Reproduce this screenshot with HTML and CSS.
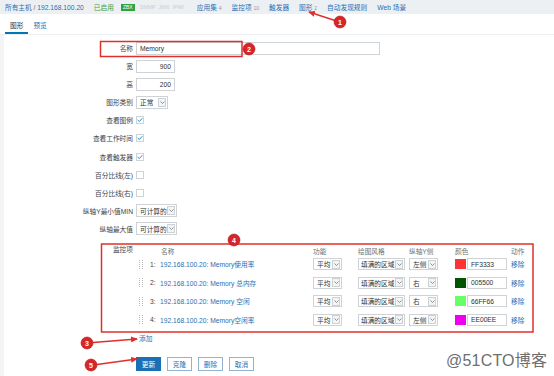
FILE: index.html
```html
<!DOCTYPE html>
<html lang="zh-CN">
<head>
<meta charset="utf-8">
<title>图形</title>
<link rel="stylesheet" href="styles.css">
</head>
<body>
<div class="page">
  <nav class="hostnav">
    <span class="crumb"><a class="lnk">所有主机</a> <span class="sep">/</span> <a class="lnk">192.168.100.20</a></span>
    <span class="enabled">已启用</span>
    <span class="avail"><span class="zbx">ZBX</span><span class="na">SNMP</span><span class="na">JMX</span><span class="na">IPMI</span></span>
    <a class="lnk">应用集 <sup>4</sup></a>
    <a class="lnk">监控项 <sup>10</sup></a>
    <a class="lnk">触发器</a>
    <a class="lnk cur">图形 <sup>2</sup></a>
    <a class="lnk">自动发现规则</a>
    <a class="lnk">Web 场景</a>
  </nav>
  <div class="tabs"><span class="tab active">图形</span><span class="tab">预览</span></div>
  <main class="panel">
    <div class="form">
      <div class="row"><span class="lbl">名称</span><div class="fld"><span class="input w-name">Memory</span></div></div>
      <div class="row"><span class="lbl">宽</span><div class="fld"><span class="input num w-num">900</span></div></div>
      <div class="row"><span class="lbl">高</span><div class="fld"><span class="input num w-num">200</span></div></div>
      <div class="row"><span class="lbl">图形类别</span><div class="fld"><span class="sel w-type"><span class="val">正常</span><span class="arr"><svg width="5" height="3" viewBox="0 0 5 3"><path d="M0.5 0.5 L2.5 2.5 L4.5 0.5" fill="none" stroke="#777" stroke-width="0.8"/></svg></span></span></div></div>
      <div class="row"><span class="lbl">查看图例</span><div class="fld"><span class="cb"><svg width="7" height="6" viewBox="0 0 7 6"><path d="M0.8 3 L2.7 4.8 L6.2 1" fill="none" stroke="#0275b8" stroke-width="1"/></svg></span></div></div>
      <div class="row"><span class="lbl">查看工作时间</span><div class="fld"><span class="cb"><svg width="7" height="6" viewBox="0 0 7 6"><path d="M0.8 3 L2.7 4.8 L6.2 1" fill="none" stroke="#0275b8" stroke-width="1"/></svg></span></div></div>
      <div class="row"><span class="lbl">查看触发器</span><div class="fld"><span class="cb"><svg width="7" height="6" viewBox="0 0 7 6"><path d="M0.8 3 L2.7 4.8 L6.2 1" fill="none" stroke="#0275b8" stroke-width="1"/></svg></span></div></div>
      <div class="row"><span class="lbl">百分比线(左)</span><div class="fld"><span class="cb"></span></div></div>
      <div class="row"><span class="lbl">百分比线(右)</span><div class="fld"><span class="cb"></span></div></div>
      <div class="row"><span class="lbl">纵轴Y最小值MIN</span><div class="fld"><span class="sel w-calc"><span class="val">可计算的</span><span class="arr"><svg width="5" height="3" viewBox="0 0 5 3"><path d="M0.5 0.5 L2.5 2.5 L4.5 0.5" fill="none" stroke="#777" stroke-width="0.8"/></svg></span></span></div></div>
      <div class="row"><span class="lbl">纵轴最大值</span><div class="fld"><span class="sel w-calc"><span class="val">可计算的</span><span class="arr"><svg width="5" height="3" viewBox="0 0 5 3"><path d="M0.5 0.5 L2.5 2.5 L4.5 0.5" fill="none" stroke="#777" stroke-width="0.8"/></svg></span></span></div></div>

      <div class="row row-items"><span class="lbl lbl-top">监控项</span>
        <div class="fld">
          <div class="items">
            <div class="ihead"><span></span><span></span><span>名称</span><span>功能</span><span>绘图风格</span><span>纵轴Y侧</span><span>颜色</span><span>动作</span></div>

            <div class="irow">
              <span class="grip"><svg width="4" height="9" viewBox="0 0 4 9"><g fill="#b5b5b5"><rect x="0" y="0" width="1" height="1"/><rect x="3" y="0" width="1" height="1"/><rect x="0" y="2" width="1" height="1"/><rect x="3" y="2" width="1" height="1"/><rect x="0" y="4" width="1" height="1"/><rect x="3" y="4" width="1" height="1"/><rect x="0" y="6" width="1" height="1"/><rect x="3" y="6" width="1" height="1"/><rect x="0" y="8" width="1" height="1"/><rect x="3" y="8" width="1" height="1"/></g></svg></span>
              <span class="no">1:</span>
              <a class="lnk">192.168.100.20: Memory使用率</a>
              <span class="sel s-fn"><span class="val">平均</span><span class="arr"><svg width="5" height="3" viewBox="0 0 5 3"><path d="M0.5 0.5 L2.5 2.5 L4.5 0.5" fill="none" stroke="#777" stroke-width="0.8"/></svg></span></span>
              <span class="sel s-style"><span class="val">填满的区域</span><span class="arr"><svg width="5" height="3" viewBox="0 0 5 3"><path d="M0.5 0.5 L2.5 2.5 L4.5 0.5" fill="none" stroke="#777" stroke-width="0.8"/></svg></span></span>
              <span class="sel s-axis"><span class="val">左侧</span><span class="arr"><svg width="5" height="3" viewBox="0 0 5 3"><path d="M0.5 0.5 L2.5 2.5 L4.5 0.5" fill="none" stroke="#777" stroke-width="0.8"/></svg></span></span>
              <span class="color"><span class="sw" style="background:#FF3333"></span><span class="input c-in">FF3333</span></span>
              <a class="lnk">移除</a>
            </div>

            <div class="irow">
              <span class="grip"><svg width="4" height="9" viewBox="0 0 4 9"><g fill="#b5b5b5"><rect x="0" y="0" width="1" height="1"/><rect x="3" y="0" width="1" height="1"/><rect x="0" y="2" width="1" height="1"/><rect x="3" y="2" width="1" height="1"/><rect x="0" y="4" width="1" height="1"/><rect x="3" y="4" width="1" height="1"/><rect x="0" y="6" width="1" height="1"/><rect x="3" y="6" width="1" height="1"/><rect x="0" y="8" width="1" height="1"/><rect x="3" y="8" width="1" height="1"/></g></svg></span>
              <span class="no">2:</span>
              <a class="lnk">192.168.100.20: Memory 总内存</a>
              <span class="sel s-fn"><span class="val">平均</span><span class="arr"><svg width="5" height="3" viewBox="0 0 5 3"><path d="M0.5 0.5 L2.5 2.5 L4.5 0.5" fill="none" stroke="#777" stroke-width="0.8"/></svg></span></span>
              <span class="sel s-style"><span class="val">填满的区域</span><span class="arr"><svg width="5" height="3" viewBox="0 0 5 3"><path d="M0.5 0.5 L2.5 2.5 L4.5 0.5" fill="none" stroke="#777" stroke-width="0.8"/></svg></span></span>
              <span class="sel s-axis"><span class="val">右</span><span class="arr"><svg width="5" height="3" viewBox="0 0 5 3"><path d="M0.5 0.5 L2.5 2.5 L4.5 0.5" fill="none" stroke="#777" stroke-width="0.8"/></svg></span></span>
              <span class="color"><span class="sw" style="background:#005500"></span><span class="input c-in">005500</span></span>
              <a class="lnk">移除</a>
            </div>

            <div class="irow">
              <span class="grip"><svg width="4" height="9" viewBox="0 0 4 9"><g fill="#b5b5b5"><rect x="0" y="0" width="1" height="1"/><rect x="3" y="0" width="1" height="1"/><rect x="0" y="2" width="1" height="1"/><rect x="3" y="2" width="1" height="1"/><rect x="0" y="4" width="1" height="1"/><rect x="3" y="4" width="1" height="1"/><rect x="0" y="6" width="1" height="1"/><rect x="3" y="6" width="1" height="1"/><rect x="0" y="8" width="1" height="1"/><rect x="3" y="8" width="1" height="1"/></g></svg></span>
              <span class="no">3:</span>
              <a class="lnk">192.168.100.20: Memory 空闲</a>
              <span class="sel s-fn"><span class="val">平均</span><span class="arr"><svg width="5" height="3" viewBox="0 0 5 3"><path d="M0.5 0.5 L2.5 2.5 L4.5 0.5" fill="none" stroke="#777" stroke-width="0.8"/></svg></span></span>
              <span class="sel s-style"><span class="val">填满的区域</span><span class="arr"><svg width="5" height="3" viewBox="0 0 5 3"><path d="M0.5 0.5 L2.5 2.5 L4.5 0.5" fill="none" stroke="#777" stroke-width="0.8"/></svg></span></span>
              <span class="sel s-axis"><span class="val">右</span><span class="arr"><svg width="5" height="3" viewBox="0 0 5 3"><path d="M0.5 0.5 L2.5 2.5 L4.5 0.5" fill="none" stroke="#777" stroke-width="0.8"/></svg></span></span>
              <span class="color"><span class="sw" style="background:#66FF66"></span><span class="input c-in">66FF66</span></span>
              <a class="lnk">移除</a>
            </div>

            <div class="irow">
              <span class="grip"><svg width="4" height="9" viewBox="0 0 4 9"><g fill="#b5b5b5"><rect x="0" y="0" width="1" height="1"/><rect x="3" y="0" width="1" height="1"/><rect x="0" y="2" width="1" height="1"/><rect x="3" y="2" width="1" height="1"/><rect x="0" y="4" width="1" height="1"/><rect x="3" y="4" width="1" height="1"/><rect x="0" y="6" width="1" height="1"/><rect x="3" y="6" width="1" height="1"/><rect x="0" y="8" width="1" height="1"/><rect x="3" y="8" width="1" height="1"/></g></svg></span>
              <span class="no">4:</span>
              <a class="lnk">192.168.100.20: Memory空闲率</a>
              <span class="sel s-fn"><span class="val">平均</span><span class="arr"><svg width="5" height="3" viewBox="0 0 5 3"><path d="M0.5 0.5 L2.5 2.5 L4.5 0.5" fill="none" stroke="#777" stroke-width="0.8"/></svg></span></span>
              <span class="sel s-style"><span class="val">填满的区域</span><span class="arr"><svg width="5" height="3" viewBox="0 0 5 3"><path d="M0.5 0.5 L2.5 2.5 L4.5 0.5" fill="none" stroke="#777" stroke-width="0.8"/></svg></span></span>
              <span class="sel s-axis"><span class="val">左侧</span><span class="arr"><svg width="5" height="3" viewBox="0 0 5 3"><path d="M0.5 0.5 L2.5 2.5 L4.5 0.5" fill="none" stroke="#777" stroke-width="0.8"/></svg></span></span>
              <span class="color"><span class="sw" style="background:#EE00EE"></span><span class="input c-in">EE00EE</span></span>
              <a class="lnk">移除</a>
            </div>
          </div>
          <a class="lnk add">添加</a>
        </div>
      </div>

      <div class="row row-btns"><span class="lbl"></span>
        <div class="fld btns">
          <span class="btn primary">更新</span>
          <span class="btn">克隆</span>
          <span class="btn">删除</span>
          <span class="btn">取消</span>
        </div>
      </div>
    </div>
  </main>

  <svg class="annot" width="554" height="376" viewBox="0 0 554 376">
    <defs>
      <marker id="ah" markerWidth="7" markerHeight="6" refX="6" refY="3" orient="auto" markerUnits="userSpaceOnUse">
        <path d="M0,0 L7,3 L0,6 z" fill="#e0302c"/>
      </marker>
    </defs>
    <g fill="none" stroke="#e0302c" stroke-width="1.5">
      <rect x="100.5" y="41.5" width="141.5" height="15"/>
      <rect x="101.5" y="244" width="431.5" height="88"/>
    </g>
    <g stroke="#e0302c" stroke-width="1.4" marker-end="url(#ah)">
      <line x1="335" y1="20.5" x2="309" y2="12"/>
      <line x1="93" y1="342.5" x2="137" y2="339"/>
      <line x1="97" y1="364.5" x2="137" y2="359"/>
    </g>
    <g fill="#d8252a" stroke="#b01818" stroke-width="0.6">
      <circle cx="340" cy="22" r="6"/>
      <circle cx="249" cy="49" r="6"/>
      <circle cx="87" cy="343" r="6"/>
      <circle cx="234" cy="240" r="6"/>
      <circle cx="91" cy="365" r="6"/>
    </g>
    <g class="bn" fill="#ffffff" font-size="7" text-anchor="middle">
      <text x="340" y="24.5">1</text>
      <text x="249" y="51.5">2</text>
      <text x="87" y="345.5">3</text>
      <text x="234" y="242.5">4</text>
      <text x="91" y="367.5">5</text>
    </g>
  </svg>

  <div class="watermark">@51CTO博客</div>
</div>
</body>
</html>
```

FILE: styles.css
```css
* { box-sizing: border-box; }

html, body {
  margin: 0;
  padding: 0;
}

body {
  width: 554px;
  height: 376px;
  overflow: hidden;
  background: #ffffff;
  font-family: "Liberation Sans", "Noto Sans CJK SC", sans-serif;
  font-size: 6.7px;
  color: #2a3236;
}

.page {
  position: relative;
  width: 554px;
  height: 376px;
}

.lnk {
  color: #1f6fb3;
  text-decoration: none;
}

sup {
  font-size: 5px;
  color: #8a97a3;
  vertical-align: baseline;
}

/* ---------- host navigation ---------- */
.hostnav {
  display: flex;
  align-items: center;
  height: 14px;
  padding-left: 5px;
  gap: 10px;
  background: #edf0f3;
  white-space: nowrap;
}

.crumb .sep {
  color: #5a6670;
}

.enabled {
  color: #3fa048;
}

.avail {
  display: flex;
  align-items: center;
  gap: 3px;
  margin-left: -3px;
}

.zbx {
  background: #34a044;
  color: #ffffff;
  font-size: 5px;
  padding: 1px 2px;
  margin-right: 2px;
  line-height: 5px;
}

.na {
  color: #c6cdd3;
  font-size: 5.5px;
}

.avail + .lnk {
  margin-left: 3px;
}

/* ---------- tabs ---------- */
.tabs {
  display: flex;
  height: 21px;
  padding-left: 5px;
  align-items: flex-end;
  background: #ffffff;
  border-bottom: 1px solid #eceff1;
}

.tab {
  padding: 0 5px;
  height: 13px;
  line-height: 9px;
  color: #1f6fb3;
  border-bottom: 2px solid transparent;
}

.tab.active {
  color: #2a3236;
  border-bottom-color: #0275b8;
}

/* ---------- form panel ---------- */
.panel {
  border-left: 4px solid #f3f4f5;
  padding-top: 6.5px;
  height: 341px;
}

.form {
  display: flex;
  flex-direction: column;
  gap: 5.1px;
}

.row {
  display: grid;
  grid-template-columns: 129px 1fr;
  column-gap: 3px;
  align-items: center;
  min-height: 13px;
}

.lbl {
  text-align: right;
  color: #3b4348;
  white-space: nowrap;
}

.fld {
  display: flex;
  align-items: center;
}

.input {
  display: inline-flex;
  align-items: center;
  height: 13px;
  border: 1px solid #cfd3d6;
  background: #ffffff;
  padding: 0 3px;
  color: #2a3236;
  white-space: nowrap;
}

.input.num {
  justify-content: flex-end;
}

.w-name { width: 244px; }
.w-num  { width: 39px; }

.sel {
  display: inline-flex;
  align-items: center;
  height: 13px;
  border: 1px solid #cfd3d6;
  background: #ffffff;
  white-space: nowrap;
}

.sel .val {
  flex: 1;
  padding-left: 3px;
}

.sel .arr {
  flex: none;
  width: 8px;
  height: 9px;
  margin-right: 1px;
  border: 1px solid #cdd1d4;
  background: #f3f4f5;
  display: flex;
  align-items: center;
  justify-content: center;
}

.w-type { width: 32px; }
.w-calc { width: 41px; }

.cb {
  width: 8px;
  height: 8px;
  border: 1px solid #cfd3d6;
  background: #ffffff;
  display: flex;
  align-items: center;
  justify-content: center;
}

/* ---------- items ---------- */
.row-items {
  align-items: start;
}

.lbl-top {
  padding-top: 5px;
  line-height: 8px;
}

.row-items .fld {
  flex-direction: column;
  align-items: flex-start;
}

.items {
  padding-top: 5px;
}

.ihead,
.irow {
  display: grid;
  grid-template-columns: 11px 13px 153px 45px 51px 46px 56px 30px;
  align-items: center;
}

.ihead {
  height: 8px;
  color: #6a7479;
  margin-bottom: 1.25px;
}

.ihead span:nth-child(3) { padding-left: 1px; }

.irow {
  height: 18.5px;
}

.grip {
  display: flex;
  padding-left: 3px;
}

.no {
  padding-left: 3px;
  color: #3b4348;
}

.irow .sel {
  height: 12px;
}

.s-fn    { width: 29px; }
.s-style { width: 47px; }
.s-style .val { padding-left: 2px; }
.s-axis  { width: 29px; }

.color {
  display: flex;
  align-items: center;
}

.sw {
  width: 11px;
  height: 10px;
}

.c-in {
  width: 40px;
  height: 12px;
  margin-left: 1px;
}

.add {
  margin-top: 6px;
  margin-left: 3px;
  line-height: 8px;
}

/* ---------- buttons ---------- */
.row-btns {
  margin-top: 9px;
}

.btns {
  gap: 6px;
}

.btn {
  width: 25px;
  height: 14px;
  display: flex;
  align-items: center;
  justify-content: center;
  border: 1px solid #8fb3d1;
  background: #ffffff;
  color: #1f6fb3;
}

.btn.primary {
  background: #1a6fb5;
  border-color: #1a6fb5;
  color: #ffffff;
}

/* ---------- overlays ---------- */
.annot {
  position: absolute;
  left: 0;
  top: 0;
  pointer-events: none;
}

.bn {
  font-family: "Liberation Sans", sans-serif;
  font-weight: bold;
}

.watermark {
  position: absolute;
  left: 446px;
  top: 347px;
  font-family: "Liberation Sans", "Noto Sans CJK SC", sans-serif;
  font-size: 16px;
  color: #6e6e6e;
  letter-spacing: 0.2px;
  white-space: nowrap;
}
```
